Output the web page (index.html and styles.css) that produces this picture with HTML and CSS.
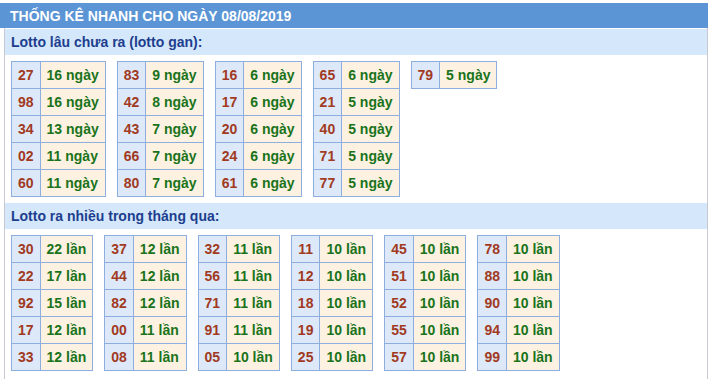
FILE: index.html
```html
<!DOCTYPE html>
<html lang="vi">
<head>
<meta charset="utf-8">
<title>Thống kê nhanh</title>
<link rel="stylesheet" href="styles.css">
</head>
<body>
<div class="header">THỐNG KÊ NHANH CHO NGÀY 08/08/2019</div>
<div class="box">
  <div class="sub">Lotto lâu chưa ra (lotto gan):</div>
  <div class="tables gan">
    <table><tr><td class="n">27</td><td class="v">16 ngày</td></tr><tr><td class="n">98</td><td class="v">16 ngày</td></tr><tr><td class="n">34</td><td class="v">13 ngày</td></tr><tr><td class="n">02</td><td class="v">11 ngày</td></tr><tr><td class="n">60</td><td class="v">11 ngày</td></tr></table>
    <table><tr><td class="n">83</td><td class="v">9 ngày</td></tr><tr><td class="n">42</td><td class="v">8 ngày</td></tr><tr><td class="n">43</td><td class="v">7 ngày</td></tr><tr><td class="n">66</td><td class="v">7 ngày</td></tr><tr><td class="n">80</td><td class="v">7 ngày</td></tr></table>
    <table><tr><td class="n">16</td><td class="v">6 ngày</td></tr><tr><td class="n">17</td><td class="v">6 ngày</td></tr><tr><td class="n">20</td><td class="v">6 ngày</td></tr><tr><td class="n">24</td><td class="v">6 ngày</td></tr><tr><td class="n">61</td><td class="v">6 ngày</td></tr></table>
    <table><tr><td class="n">65</td><td class="v">6 ngày</td></tr><tr><td class="n">21</td><td class="v">5 ngày</td></tr><tr><td class="n">40</td><td class="v">5 ngày</td></tr><tr><td class="n">71</td><td class="v">5 ngày</td></tr><tr><td class="n">77</td><td class="v">5 ngày</td></tr></table>
    <table><tr><td class="n">79</td><td class="v">5 ngày</td></tr></table>
  </div>
  <div class="sub">Lotto ra nhiều trong tháng qua:</div>
  <div class="tables nhieu">
    <table><tr><td class="n">30</td><td class="v">22 lần</td></tr><tr><td class="n">22</td><td class="v">17 lần</td></tr><tr><td class="n">92</td><td class="v">15 lần</td></tr><tr><td class="n">17</td><td class="v">12 lần</td></tr><tr><td class="n">33</td><td class="v">12 lần</td></tr></table>
    <table><tr><td class="n">37</td><td class="v">12 lần</td></tr><tr><td class="n">44</td><td class="v">12 lần</td></tr><tr><td class="n">82</td><td class="v">12 lần</td></tr><tr><td class="n">00</td><td class="v">11 lần</td></tr><tr><td class="n">08</td><td class="v">11 lần</td></tr></table>
    <table><tr><td class="n">32</td><td class="v">11 lần</td></tr><tr><td class="n">56</td><td class="v">11 lần</td></tr><tr><td class="n">71</td><td class="v">11 lần</td></tr><tr><td class="n">91</td><td class="v">11 lần</td></tr><tr><td class="n">05</td><td class="v">10 lần</td></tr></table>
    <table><tr><td class="n">11</td><td class="v">10 lần</td></tr><tr><td class="n">12</td><td class="v">10 lần</td></tr><tr><td class="n">18</td><td class="v">10 lần</td></tr><tr><td class="n">19</td><td class="v">10 lần</td></tr><tr><td class="n">25</td><td class="v">10 lần</td></tr></table>
    <table><tr><td class="n">45</td><td class="v">10 lần</td></tr><tr><td class="n">51</td><td class="v">10 lần</td></tr><tr><td class="n">52</td><td class="v">10 lần</td></tr><tr><td class="n">55</td><td class="v">10 lần</td></tr><tr><td class="n">57</td><td class="v">10 lần</td></tr></table>
    <table><tr><td class="n">78</td><td class="v">10 lần</td></tr><tr><td class="n">88</td><td class="v">10 lần</td></tr><tr><td class="n">90</td><td class="v">10 lần</td></tr><tr><td class="n">94</td><td class="v">10 lần</td></tr><tr><td class="n">99</td><td class="v">10 lần</td></tr></table>
  </div>
</div>
</body>
</html>
```
FILE: styles.css
```css
html, body {
  margin: 0;
  padding: 0;
  background: #ffffff;
}
body {
  padding-top: 3px;
  font-family: "Liberation Sans", Arial, sans-serif;
  font-size: 14px;
  font-weight: bold;
}
.header {
  width: 698px;
  height: 25px;
  line-height: 26px;
  padding-left: 10px;
  background: #5b95d5;
  color: #ffffff;
  font-size: 14px;
}
.box {
  margin-left: 4px;
  width: 702px;
  border-left: 1px solid #c9c9d1;
  border-right: 1px solid #c9c9d1;
  padding-top: 1px;
  min-height: 360px;
}
.sub {
  height: 26px;
  line-height: 26px;
  padding-left: 6px;
  background: #d5e8fb;
  color: #1d3e8e;
}
.tables {
  display: flex;
  align-items: flex-start;
  padding: 6px 0 6px 6px;
}
.gan { gap: 11px; }
.nhieu { gap: 11px; }
table {
  border-collapse: collapse;
}
td {
  border: 1px solid #8eaee0;
  height: 27px;
  padding: 0 6px;
  box-sizing: border-box;
  line-height: 16px;
  white-space: nowrap;
}
td.n {
  background: #dde9f9;
  color: #a13a1f;
  text-align: center;
}
td.v {
  background: #fdf2e2;
  color: #1a731a;
}
```
